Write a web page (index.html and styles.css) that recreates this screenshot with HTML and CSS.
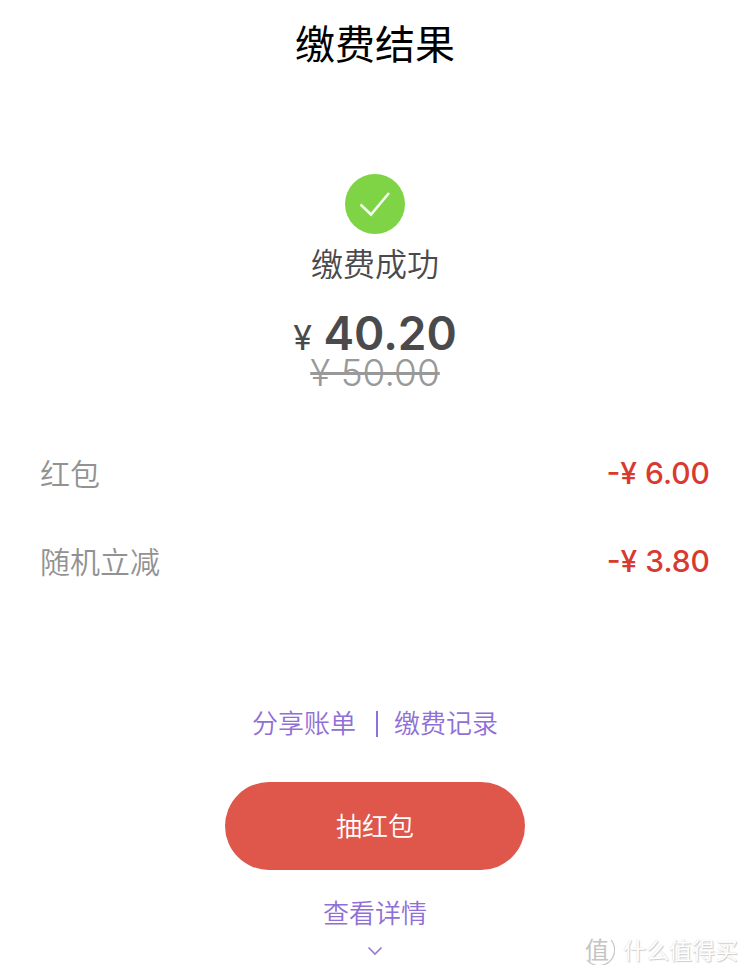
FILE: index.html
```html
<!DOCTYPE html>
<html lang="zh-CN">

<head>
  <meta charset="UTF-8">
  <meta name="viewport" content="width=device-width, initial-scale=1.0">
  <title>缴费结果</title>
  <link rel="stylesheet" href="styles.css">
</head>

<body>

  <header class="header">
    <h1>缴费结果</h1>
  </header>

  <main>
    <section class="result">
      <svg class="result-icon" viewBox="0 0 60 60" aria-hidden="true">
        <circle cx="30" cy="30" r="30" fill="#7fd446" />
        <path d="M15.5 30.5 L26 40.5 L44 19" fill="none" stroke="#f4fff0" stroke-width="2.6" />
      </svg>
      <p class="result-text">缴费成功</p>
      <p class="amount"><span class="currency">¥</span> 40.20</p>
      <del class="origin">¥ 50.00</del>
    </section>

    <dl class="discounts">
      <div class="discount">
        <dt>红包</dt>
        <dd>-¥ 6.00</dd>
      </div>
      <div class="discount">
        <dt>随机立减</dt>
        <dd>-¥ 3.80</dd>
      </div>
    </dl>

    <nav class="links">
      <a href="#share">分享账单</a>
      <a href="#record">缴费记录</a>
    </nav>

    <div class="actions">
      <button type="button" class="draw-btn">抽红包</button>
      <a href="#detail" class="detail">
        查看详情
        <svg class="arrow" viewBox="0 0 16 10" aria-hidden="true">
          <path d="M1.5 1.5 L8 8 L14.5 1.5" fill="none" stroke="#9678d8" stroke-width="1.6" />
        </svg>
      </a>
    </div>
  </main>

  <div class="watermark">
    <svg class="watermark-ring" viewBox="0 0 32 32" aria-hidden="true">
      <path d="M4 27 A14.5 14.5 0 0 0 28 7" fill="none" stroke="#c8c8c8" stroke-width="1.2" />
    </svg>
    <span class="watermark-logo">值</span>
    <span class="watermark-text">什么值得买</span>
  </div>

</body>

</html>
```

FILE: styles.css
```css
* {
  box-sizing: border-box;
}

body {
  margin: 0;
  font-family: "Noto Sans CJK SC", sans-serif;
  background-color: #fff;
  color: #4a4a4d;
}

h1,
p,
dl,
dd {
  margin: 0;
}

a {
  color: #8f70d6;
  text-decoration: none;
}

.header {
  text-align: center;
}

.header h1 {
  font-size: 40px;
  font-weight: 400;
  line-height: 84px;
  color: #000;
}

.result {
  display: flex;
  flex-direction: column;
  align-items: center;
  padding-top: 90px;
}

.result-icon {
  width: 60px;
  height: 60px;
}

.result-text {
  margin-top: 4px;
  font-size: 32px;
  font-weight: 350;
  line-height: 48px;
}

.amount,
.origin,
.discount dd {
  font-family: Inter, "Noto Sans CJK SC", sans-serif;
}

.amount {
  margin-top: 23px;
  font-size: 46px;
  font-weight: 600;
  line-height: 48px;
}

.currency {
  font-size: 34px;
  font-weight: 400;
  line-height: 1;
}

.origin {
  font-size: 37px;
  font-weight: 300;
  line-height: 32px;
  color: #999;
}

.discounts {
  padding-top: 41px;
}

.discount {
  display: flex;
  justify-content: space-between;
  padding: 0 40px 4px;
  font-size: 30px;
  line-height: 84px;
}

.discount dt {
  font-weight: 350;
  color: #929292;
}

.discount dd {
  padding-top: 2px;
  line-height: 82px;
  font-weight: 500;
  color: #d93a2f;
}

.links {
  display: flex;
  justify-content: center;
  align-items: center;
  padding-top: 96px;
  font-size: 26px;
  font-weight: 350;
  line-height: 40px;
}

.links a + a::before {
  content: "";
  display: inline-block;
  width: 2px;
  height: 26px;
  margin: 0 16px 0 20px;
  background-color: #8f70d6;
  vertical-align: -4px;
}

.actions {
  display: flex;
  flex-direction: column;
  align-items: center;
  padding-top: 40px;
}

.draw-btn {
  width: 40%;
  height: 88px;
  padding: 0 0 4px;
  border: none;
  border-radius: 44px;
  background-color: #df574b;
  color: #fff;
  font-family: inherit;
  font-size: 26px;
  font-weight: 350;
  cursor: pointer;
}

.detail {
  display: flex;
  flex-direction: column;
  align-items: center;
  margin-top: 22px;
  font-size: 26px;
  font-weight: 350;
  line-height: 40px;
}

.arrow {
  width: 16px;
  height: 10px;
  margin-top: 14px;
}

/* overlay in the bottom corner */
.watermark {
  position: absolute;
  right: 12px;
  bottom: 12px;
  display: flex;
  align-items: center;
  gap: 12px;
  line-height: 32px;
  color: #fff;
  text-shadow: 1px 1px 1px #ccc, 0 0 1px #ccc;
}

.watermark-ring {
  position: absolute;
  left: 0;
  top: 0;
  width: 32px;
  height: 32px;
}

.watermark-logo {
  width: 28px;
  font-size: 24px;
  text-align: center;
  color: #c4c4c4;
  text-shadow: none;
}

.watermark-text {
  font-size: 23px;
}
```
